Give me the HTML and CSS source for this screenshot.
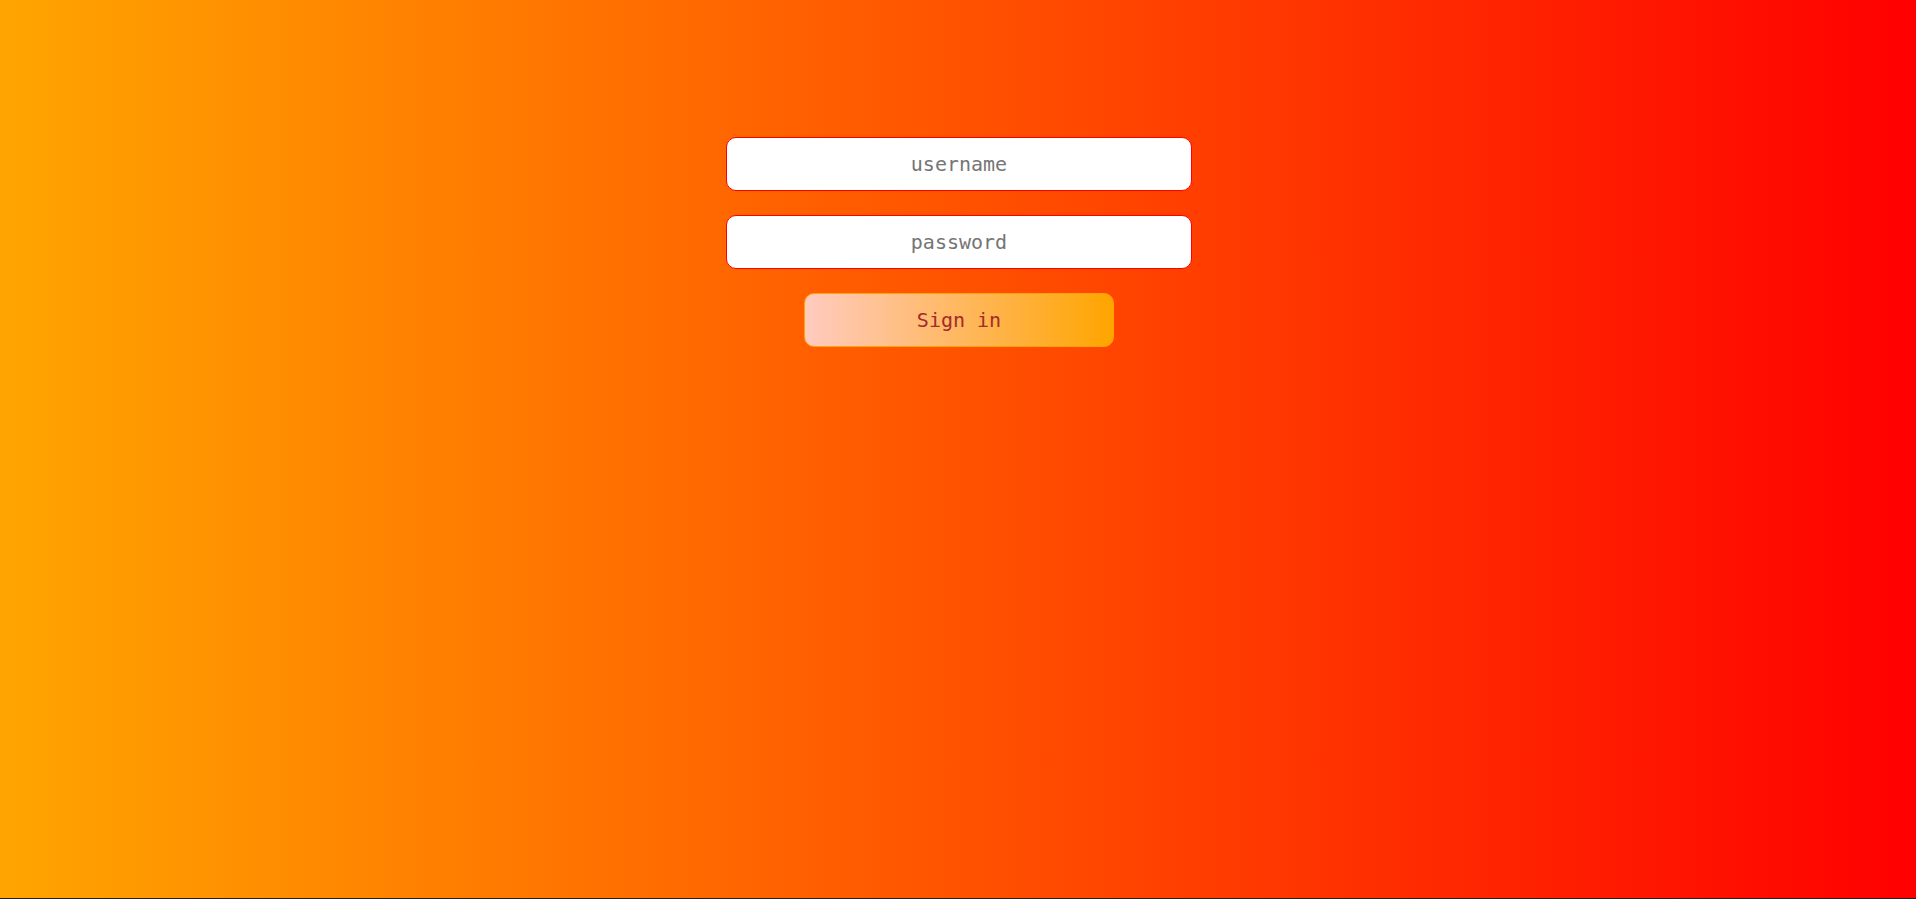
FILE: index.html
```html
<!DOCTYPE html>
<html lang="en">
<head>
<meta charset="utf-8">
<title>Sign in</title>
<link rel="stylesheet" href="styles.css">
</head>
<body>
<main class="page">
  <form class="login">
    <input class="field" type="text" placeholder="username">
    <input class="field" type="password" placeholder="password">
    <button class="submit" type="button">Sign in</button>
  </form>
</main>
<div class="bottom-line"></div>
</body>
</html>
```
FILE: styles.css
```css
html, body {
  margin: 0;
  padding: 0;
  height: 100%;
}
body {
  background: #222;
  font-family: "DejaVu Sans Mono", "Liberation Mono", monospace;
  overflow: hidden;
}
.page {
  height: calc(100vh - 1px);
  background: linear-gradient(to right, #ffa500, #ff0000);
  display: flex;
  justify-content: center;
  padding-top: 137px;
  box-sizing: border-box;
}
.login {
  display: flex;
  flex-direction: column;
  align-items: center;
  gap: 24px;
  padding-left: 2px;
}
.field {
  width: 466px;
  height: 54px;
  box-sizing: border-box;
  border: 1px solid #ff0000;
  border-radius: 10px;
  background: #fff;
  text-align: center;
  font-family: "DejaVu Sans Mono", "Liberation Mono", monospace;
  font-size: 20px;
  color: #333;
  outline: none;
  padding: 0 10px;
}
.field::placeholder {
  color: #757575;
}
.submit {
  width: 310px;
  height: 54px;
  box-sizing: border-box;
  border: 1px solid #ffa500;
  border-radius: 10px;
  background: linear-gradient(to right, #ffcbc0, #ffa500);
  color: #a52a2a;
  font-family: "DejaVu Sans Mono", "Liberation Mono", monospace;
  font-size: 20px;
  cursor: pointer;
}
.bottom-line {
  height: 1px;
  background: #222;
}
```
